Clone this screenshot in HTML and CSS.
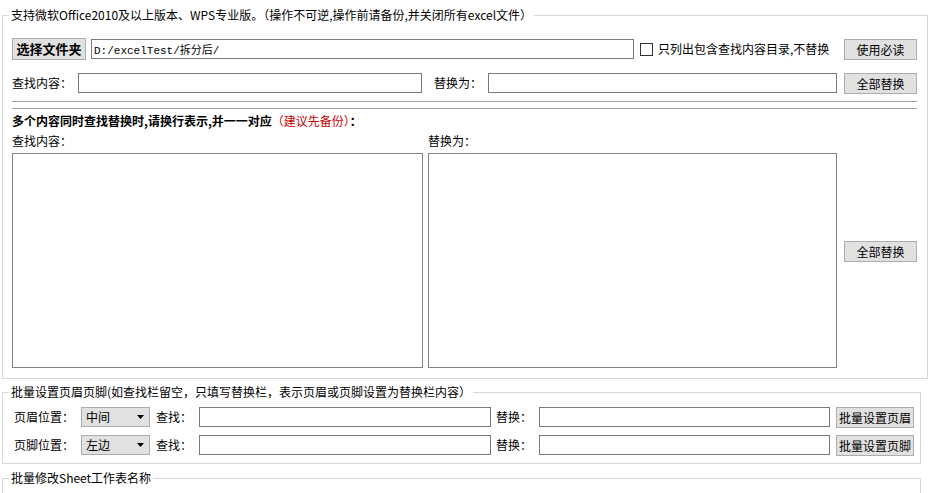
FILE: index.html
```html
<!DOCTYPE html>
<html lang="zh-CN">
<head>
<meta charset="utf-8">
<title>批量查找替换</title>
<link rel="stylesheet" href="styles.css">
</head>
<body>
<fieldset class="group group-main">
  <legend>支持微软Office2010及以上版本、WPS专业版。（操作不可逆,操作前请备份,并关闭所有excel文件）</legend>
  <div class="row row-folder">
    <button class="btn btn-folder" type="button">选择文件夹</button>
    <input class="field field-path" type="text" value="D:/excelTest/拆分后/">
    <label class="check"><input type="checkbox" class="checkbox"><span>只列出包含查找内容目录,不替换</span></label>
    <button class="btn btn-side btn-top" type="button">使用必读</button>
  </div>
  <div class="row row-single">
    <span class="lbl lbl-find">查找内容：</span>
    <input class="field field-find" type="text">
    <span class="lbl lbl-repl">替换为：</span>
    <input class="field field-repl" type="text">
    <button class="btn btn-side" type="button">全部替换</button>
  </div>
  <div class="sep"></div>
  <div class="sep sep-2"></div>
  <div class="multi-title">多个内容同时查找替换时,请换行表示,并一一对应<span class="warn">（建议先备份）</span>：</div>
  <div class="multi">
    <div class="col col-find">
      <div class="col-lbl">查找内容：</div>
      <textarea class="area"></textarea>
    </div>
    <div class="col col-repl">
      <div class="col-lbl">替换为：</div>
      <textarea class="area"></textarea>
    </div>
    <button class="btn btn-side btn-multi" type="button">全部替换</button>
  </div>
</fieldset>

<fieldset class="group group-hf">
  <legend>批量设置页眉页脚(如查找栏留空，只填写替换栏，表示页眉或页脚设置为替换栏内容）</legend>
  <div class="hf-row">
    <span class="lbl lbl-pos">页眉位置：</span>
    <div class="select"><span>中间</span><svg class="arrow" width="7" height="4" viewBox="0 0 7 4"><path d="M0 0H7L3.5 4Z" fill="#000"/></svg></div>
    <span class="lbl lbl-s">查找：</span>
    <input class="field field-hf-find" type="text">
    <span class="lbl lbl-s lbl-s2">替换：</span>
    <input class="field field-hf-repl" type="text">
    <button class="btn btn-hf" type="button">批量设置页眉</button>
  </div>
  <div class="hf-row hf-row-2">
    <span class="lbl lbl-pos">页脚位置：</span>
    <div class="select"><span>左边</span><svg class="arrow" width="7" height="4" viewBox="0 0 7 4"><path d="M0 0H7L3.5 4Z" fill="#000"/></svg></div>
    <span class="lbl lbl-s">查找：</span>
    <input class="field field-hf-find" type="text">
    <span class="lbl lbl-s lbl-s2">替换：</span>
    <input class="field field-hf-repl" type="text">
    <button class="btn btn-hf" type="button">批量设置页脚</button>
  </div>
</fieldset>

<fieldset class="group group-sheet">
  <legend>批量修改Sheet工作表名称</legend>
  <div class="sheet-body"></div>
</fieldset>
</body>
</html>
```

FILE: styles.css
```css
* {
  box-sizing: border-box;
}

html, body {
  margin: 0;
  padding: 0;
  background: #fff;
}

body {
  width: 930px;
  height: 493px;
  overflow: hidden;
  padding-top: 7px;
  font-family: "Noto Sans CJK SC", "Noto Sans", sans-serif;
  font-size: 12px;
  line-height: 16px;
  color: #000;
}

.group {
  margin: 0 2px 0 2px;
  border: 1px solid #d8d8d8;
  padding: 0 10px 10px 9px;
  min-width: 0;
}

.group legend {
  padding: 0 2px;
  margin-left: -3px;
  line-height: 16px;
  white-space: nowrap;
}

.row {
  display: flex;
  align-items: flex-start;
}

.btn {
  font: inherit;
  color: #000;
  background: #e1e1e1;
  border: 1px solid #adadad;
  border-radius: 0;
  padding: 0;
  height: 21px;
  line-height: 19px;
  cursor: default;
}

.btn-side {
  width: 73px;
  margin-left: auto;
}

.field {
  font: inherit;
  height: 20px;
  border: 1px solid #7a7a7a;
  background: #fff;
  padding: 0 2px;
  border-radius: 0;
  outline: none;
}

/* row 1 */
.row-folder {
  margin-top: 15px;
  height: 22px;
}

.btn-folder {
  width: 74px;
  height: 22px;
  font-size: 13px;
  font-weight: bold;
  line-height: 20px;
}

.field-path {
  width: 543px;
  margin: 1px 0 0 5px;
  font-family: "Liberation Mono", "Noto Sans CJK SC", monospace;
  font-size: 11px;
}

.check {
  display: flex;
  align-items: center;
  height: 22px;
  margin-left: 6px;
}

.checkbox {
  appearance: none;
  -webkit-appearance: none;
  width: 13px;
  height: 13px;
  margin: 0 5px 0 0;
  border: 1px solid #333;
  background: #fff;
}

.btn-top {
  margin-top: 1px;
}

/* row 2 */
.row-single {
  margin-top: 13px;
  height: 21px;
}

.lbl {
  line-height: 20px;
  white-space: nowrap;
}

.lbl-find {
  width: 66px;
}

.field-find {
  width: 344px;
}

.lbl-repl {
  width: 66px;
  padding-left: 12px;
}

.field-repl {
  width: 349px;
}

.sep {
  height: 1px;
  background: #a0a0a0;
  margin-top: 7px;
}

.sep-2 {
  margin-top: 6px;
}

.multi-title {
  margin-top: 4px;
  font-weight: bold;
}

.warn {
  color: #c80000;
  font-weight: normal;
}

.multi {
  display: flex;
  align-items: flex-start;
  margin-top: 4px;
}

.col-find {
  width: 411px;
}

.col-repl {
  width: 409px;
  margin-left: 5px;
}

.area {
  display: block;
  width: 100%;
  height: 215px;
  margin-top: 4px;
  border: 1px solid #828282;
  resize: none;
  font: inherit;
  outline: none;
}

.btn-multi {
  margin-top: 108px;
}

/* header / footer */
.group-hf {
  margin: 5px 9px 0 2px;
  padding: 0 6px 7px 9px;
}

.hf-row {
  display: flex;
  align-items: flex-start;
  height: 21px;
  margin-top: 7px;
  padding-left: 2px;
}

.lbl-pos {
  width: 67px;
}

.select {
  width: 69px;
  height: 20px;
  display: flex;
  align-items: center;
  justify-content: space-between;
  padding: 0 5px 0 4px;
  background: #e1e1e1;
  border: 1px solid #acacac;
}

.lbl-s {
  width: 43px;
  margin-left: 6px;
}

.lbl-s2 {
  margin-left: 5px;
}

.field-hf-find {
  width: 292px;
}

.field-hf-repl {
  width: 291px;
}

.btn-hf {
  width: 78px;
  margin-left: auto;
  white-space: nowrap;
}

.group-sheet {
  margin: 6px 9px 0 2px;
  padding: 0 6px 7px 9px;
}

.sheet-body {
  height: 60px;
}
```
